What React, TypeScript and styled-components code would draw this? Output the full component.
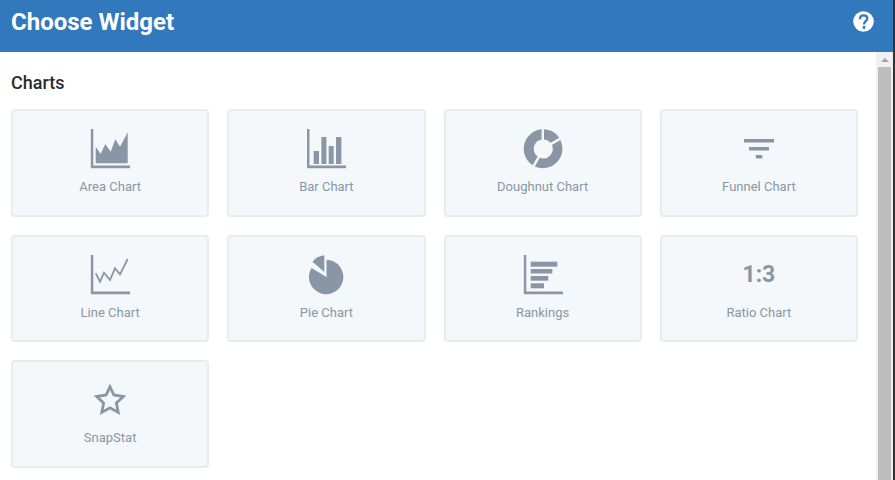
import React from "react";
import styled, { createGlobalStyle } from "styled-components";

const App = () => {
  return (
    <Window>
      <GlobalStyle />
      <Main>
        <Header>
          <Title>Choose Widget</Title>
          <HelpIcon />
        </Header>
        <Body>
          <Content>
            <Section>Charts</Section>
            <Grid>
              {widgets.map(({ label, Icon }) => (
                <Card key={label}>
                  <IconBox>
                    <Icon />
                  </IconBox>
                  <Label>{label}</Label>
                </Card>
              ))}
            </Grid>
          </Content>
          <Scrollbar>
            <Arrow />
            <Thumb />
          </Scrollbar>
        </Body>
      </Main>
      <Edge />
    </Window>
  );
};

export default App;

const AXIS = "M0.8 0H3.3V36.600H40V39.300H0.8Z";
const BAR_AXIS = "M1 0H3.500V36.600H40V39.300H1Z";

const AreaIcon = () => (
  <Glyph width="40" height="40" viewBox="0 0 40 40">
    <path d={AXIS} />
    <path d="M5.7 17.700L10.700 25L15.300 15L20.700 22.700L25.300 10.300L30 17.700L37.700 3.300V34.300H5.700Z" />
  </Glyph>
);

const BarIcon = () => (
  <Glyph width="40" height="40" viewBox="0 0 40 40">
    <path d={BAR_AXIS} />
    <rect x="7.700" y="22" width="5.300" height="13" />
    <rect x="15.400" y="8" width="5" height="27" />
    <rect x="22.700" y="17" width="5" height="18" />
    <rect x="30" y="8" width="5.400" height="27" />
  </Glyph>
);

const DoughnutIcon = () => (
  <Glyph width="40" height="40" viewBox="0 0 40 40">
    <path d="M18.600 0.300V10.400A9.500 9.500 0 0 0 14.700 27.400L9.600 36.200A19.600 19.600 0 0 1 18.600 0.300Z" />
    <path d="M21 0.300A19.600 19.600 0 0 1 36.300 8.700L27.600 13.800A9.500 9.500 0 0 0 21 10.400Z" />
    <path d="M37.400 11A19.600 19.600 0 0 1 11.800 37.500L16.800 28.800A9.500 9.500 0 0 0 28.900 16Z" />
  </Glyph>
);

const FunnelIcon = () => (
  <Glyph width="30" height="20" viewBox="0 0 30 20">
    <rect x="0" y="0" width="30" height="3.500" />
    <rect x="5" y="8" width="20" height="3.500" />
    <rect x="11.800" y="16" width="6.500" height="3.500" />
  </Glyph>
);

const LineIcon = () => (
  <Glyph width="40" height="40" viewBox="0 0 40 40">
    <path d={AXIS} />
    <Stroke
      d="M5.700 18.300L10 26.700L14 17.700L20 25L25 13.300L30 19.300L37.700 4"
      strokeWidth="1.800"
    />
  </Glyph>
);

const PieIcon = () => (
  <Glyph width="36" height="40" viewBox="0 0 36 40">
    <path d="M18.500 4.800A17.200 17.200 0 1 1 3.500 13L18.500 22Z" />
    <path d="M16.300 0.300V17L4.500 6.700A17 17 0 0 1 16.300 0.300Z" />
  </Glyph>
);

const RankingsIcon = () => (
  <Glyph width="40" height="40" viewBox="0 0 40 40">
    <path d={AXIS} />
    <rect x="7.700" y="6.700" width="26.600" height="5" />
    <rect x="7.700" y="14" width="21.600" height="4.500" />
    <rect x="7.700" y="21" width="17.600" height="4.700" />
    <rect x="7.700" y="28.300" width="13.300" height="5" />
  </Glyph>
);

const RatioIcon = () => <Ratio>1:3</Ratio>;

const StarIcon = () => (
  <Glyph width="32" height="32" viewBox="0 0 32 32">
    <Stroke
      d="M16 2.800L19.900 11L29.400 12.500L22.400 18.900L24.200 28.400L16 23.800L7.800 28.400L9.600 18.900L2.600 12.500L12.100 11Z"
      strokeWidth="2.800"
    />
  </Glyph>
);

const HelpIcon = () => (
  <svg width="21" height="21" viewBox="0 0 21 21">
    <circle cx="10.500" cy="10.500" r="10.300" fill="#fff" />
    <path
      d="M6.900 8.200C6.900 5.800 8.500 4.300 10.700 4.300C12.900 4.300 14.300 5.600 14.300 7.500C14.300 10.200 11 10.300 11 13.400"
      fill="none"
      stroke="#3278bc"
      strokeWidth="2.300"
    />
    <rect x="9.700" y="15" width="2.600" height="2.800" fill="#3278bc" />
  </svg>
);

const widgets = [
  { label: "Area Chart", Icon: AreaIcon },
  { label: "Bar Chart", Icon: BarIcon },
  { label: "Doughnut Chart", Icon: DoughnutIcon },
  { label: "Funnel Chart", Icon: FunnelIcon },
  { label: "Line Chart", Icon: LineIcon },
  { label: "Pie Chart", Icon: PieIcon },
  { label: "Rankings", Icon: RankingsIcon },
  { label: "Ratio Chart", Icon: RatioIcon },
  { label: "SnapStat", Icon: StarIcon },
];

const GlobalStyle = createGlobalStyle`
  html, body {
    margin: 0;
    height: 100%;
    overflow: hidden;
    background: #fff;
    font-family: Roboto, "Liberation Sans", sans-serif;
  }
`;

const Window = styled.div`
  display: flex;
  width: 895px;
  height: 480px;
  overflow: hidden;
`;

const Main = styled.div`
  display: flex;
  flex-direction: column;
  flex: 1;
  min-width: 0;
`;

const Edge = styled.div`
  width: 2px;
  background: #333;
`;

const Header = styled.div`
  display: flex;
  align-items: center;
  justify-content: space-between;
  height: 52px;
  padding: 0 19px 9px 11px;
  box-sizing: border-box;
  background: #3278bc;
  flex-shrink: 0;
`;

const Title = styled.div`
  color: #fff;
  font-size: 24px;
  font-weight: 700;
  line-height: 44px;
`;

const Body = styled.div`
  display: flex;
  flex: 1;
  min-height: 0;
`;

const Content = styled.div`
  flex: 1;
  padding: 20px 18px 0 11px;
  min-width: 0;
`;

const Section = styled.div`
  color: #2b2b2b;
  font-size: 18px;
  font-weight: 500;
  line-height: 22px;
  margin-bottom: 15px;
`;

const Grid = styled.div`
  display: grid;
  grid-template-columns: repeat(4, 1fr);
  grid-auto-rows: 107.5px;
  gap: 18px;
`;

const Card = styled.div`
  display: flex;
  flex-direction: column;
  align-items: center;
  box-sizing: border-box;
  padding-top: 18px;
  background: #f4f8fb;
  border: 2px solid #e8ecf0;
  border-radius: 4px;
`;

const IconBox = styled.div`
  display: flex;
  align-items: center;
  justify-content: center;
  height: 40px;
`;

const Glyph = styled.svg`
  display: block;
  fill: #8a96a5;
`;

const Stroke = styled.path`
  fill: none;
  stroke: #8a96a5;
`;

const Ratio = styled.div`
  color: #8a96a5;
  font-size: 23px;
  font-weight: 700;
  line-height: 40px;
`;

const Label = styled.div`
  margin-top: 10px;
  color: #8a96a5;
  font-size: 13px;
  line-height: 16px;
`;

const Scrollbar = styled.div`
  display: flex;
  flex-direction: column;
  align-items: center;
  width: 17px;
  background: #f0f0f0;
  flex-shrink: 0;
`;

const Arrow = styled.div`
  margin: 6px 0 5px;
  border-left: 4px solid transparent;
  border-right: 4px solid transparent;
  border-bottom: 4px solid #a3a3a3;
`;

const Thumb = styled.div`
  flex: 1;
  width: 13px;
  background: #bdbdbd;
`;
